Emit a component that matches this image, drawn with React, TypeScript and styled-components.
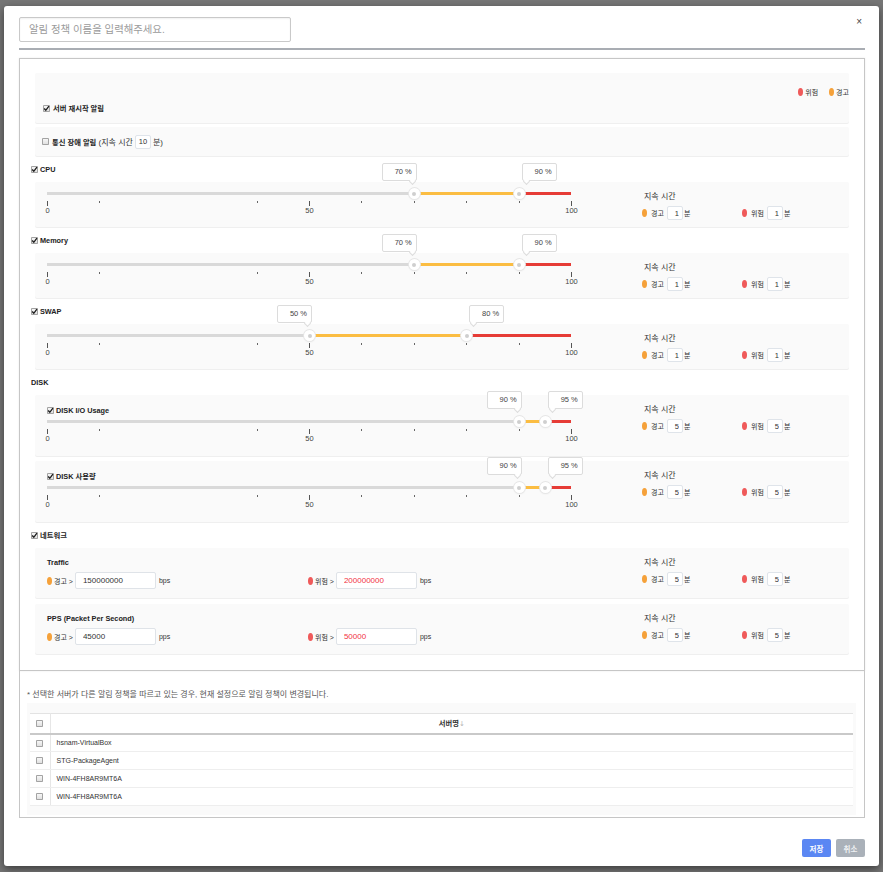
import React from "react";
import styled, { createGlobalStyle } from "styled-components";

const GlobalStyle = createGlobalStyle`
  html, body { margin: 0; padding: 0; }
  body {
    background: #767676;
    font-family: "Liberation Sans", "Noto Sans CJK KR", sans-serif;
    color: #333;
  }
  *, *::before, *::after { box-sizing: border-box; }
  input, button { font-family: inherit; }
`;

const C = {
  warn: "#f5a13a",
  danger: "#ef5a5a",
  trackWarn: "#fbbd42",
  trackDanger: "#e63c36",
  trackBase: "#d9d9d9",
};

/* ---------- shell ---------- */
const Backdrop = styled.div`
  width: 883px;
  height: 872px;
  padding: 6px 4px;
  background: #767676;
`;

const Modal = styled.div`
  height: 860px;
  background: #fff;
  border-radius: 3px;
  box-shadow: 0 3px 9px rgba(0, 0, 0, 0.5);
  padding: 11px 14px 9px 15px;
  display: flex;
  flex-direction: column;
`;

const Header = styled.div`
  display: flex;
  justify-content: space-between;
  align-items: flex-start;
`;

const NameInput = styled.input`
  width: 272px;
  height: 25px;
  border: 1px solid #c9c9c9;
  border-radius: 2px;
  padding: 0 9px;
  font-size: 10.4px;
  color: #333;
  outline: none;
  box-shadow: inset 0 1px 2px rgba(0, 0, 0, 0.06);
  &::placeholder { color: #9b9b9b; }
`;

const CloseButton = styled.button`
  border: 0;
  background: none;
  padding: 0;
  margin: 0 3px 0 0;
  font-size: 10px;
  line-height: 10px;
  color: #444;
`;

const Divider = styled.div`
  height: 2px;
  margin-top: 6px;
  background: #a9adb3;
`;

const SettingsPanel = styled.div`
  margin-top: 8px;
  border: 1px solid #c6c6c6;
  padding: 14px 15px 16px 11px;
  box-shadow: 0 0 2px rgba(0, 0, 0, 0.08);
`;

/* ---------- common bits ---------- */
const Well = styled.div<{ $h: number; $mt?: number }>`
  height: ${(p) => p.$h}px;
  margin: ${(p) => p.$mt ?? 0}px 0 0 4px;
  background: #fafafa;
  border-radius: 2px;
  box-shadow: 0 1px 0 #efefef;
`;

const RestartWell = styled(Well)`
  display: flex;
  flex-direction: column;
  padding: 14px 0 0 8px;
`;

const OutageWell = styled(Well)`
  display: flex;
  align-items: center;
  padding-left: 7px;
  font-size: 8px;
`;

const MetricWell = styled(Well)`
  display: grid;
  grid-template-columns: 524px 1fr;
  column-gap: 71px;
  align-items: start;
  padding-left: 12px;
`;

const LabelRow = styled.div`
  height: 26px;
  display: flex;
  align-items: center;
  gap: 2px;
  font-weight: bold;
  font-size: 7.3px;
  color: #222;
`;

const CheckLabel = styled.div<{ $gap?: number }>`
  display: flex;
  align-items: center;
  gap: ${(p) => p.$gap ?? 3}px;
  height: 10px;
  font-weight: bold;
  font-size: 7.3px;
  color: #222;
`;

const CheckBoxBox = styled.span`
  flex: none;
  width: 7px;
  height: 7px;
  border-radius: 1px;
  background: linear-gradient(#fbfbfb, #dcdcdc);
  box-shadow: inset 0 0 0 1px #a3a3a3;
  display: inline-flex;
  align-items: center;
  justify-content: center;
  vertical-align: middle;
`;

function Check({ checked }: { checked?: boolean }) {
  return (
    <CheckBoxBox>
      {checked && (
        <svg width="7" height="7" viewBox="0 0 7 7">
          <path d="M1.2 3.5 2.8 5.3 5.9 1.2" fill="none" stroke="#1a1a1a" strokeWidth="1.3" />
        </svg>
      )}
    </CheckBoxBox>
  );
}

const Dot = styled.span<{ $c: string }>`
  flex: none;
  width: 5px;
  height: 8px;
  border-radius: 50%;
  background: ${(p) => p.$c};
`;

const Legend = styled.div`
  display: flex;
  justify-content: flex-end;
  align-items: center;
  gap: 11px;
  height: 10px;
  font-size: 7px;
  color: #333;
`;

const LegendItem = styled.span`
  display: flex;
  align-items: center;
  gap: 2px;
`;

const RestartLabel = styled(CheckLabel)`
  margin-top: 6px;
`;

const Normal = styled.span`
  font-weight: normal;
  font-size: 8px;
  color: #333;
`;

const OutageInput = styled.input`
  width: 16px;
  height: 14px;
  margin: 0 2px;
  border: 1px solid #dfe4ea;
  border-radius: 2px;
  text-align: center;
  padding: 0;
  font-size: 7.5px;
  color: #333;
`;

/* ---------- slider ---------- */
const W = 524;
const px = (v: number) => (v / 100) * W;
const TICKS = [0, 10, 40, 50, 60, 70, 80, 90, 100];
const MAJOR = [0, 50, 100];

const SliderCol = styled.div<{ $pt: number }>`
  padding-top: ${(p) => p.$pt}px;
`;

const SubLabel = styled(CheckLabel)`
  height: 10px;
  margin-bottom: 0;
  gap: 2px;
`;

const SliderArea = styled.div`
  position: relative;
  width: ${W}px;
  height: 28px;
`;

const Track = styled.div`
  position: absolute;
  left: 0;
  right: 0;
  top: 5px;
  height: 3px;
  display: flex;
`;

const Seg = styled.div<{ $c: string }>`
  height: 100%;
  background: ${(p) => p.$c};
`;

const Tick = styled.span<{ $major?: boolean }>`
  position: absolute;
  top: 14px;
  width: 1px;
  height: ${(p) => (p.$major ? 5 : 2)}px;
  background: ${(p) => (p.$major ? "#555" : "#666")};
`;

const TickLabel = styled.span`
  position: absolute;
  top: 19px;
  transform: translateX(-50%);
  font-size: 7.5px;
  line-height: 9px;
  color: #444;
`;

const Handle = styled.span`
  position: absolute;
  top: 1px;
  width: 11px;
  height: 11px;
  margin-left: -5px;
  border-radius: 50%;
  background: #fff;
  box-shadow: 0 0 0 1px #e6e6e6, 0 1px 2px rgba(0, 0, 0, 0.08);
  display: flex;
  align-items: center;
  justify-content: center;
  &::after {
    content: "";
    width: 4px;
    height: 4px;
    border-radius: 50%;
    background: #cfcfcf;
  }
`;

const Bubble = styled.span<{ $side: "left" | "right" }>`
  position: absolute;
  top: -24px;
  width: 35px;
  height: 18px;
  background: #fff;
  border: 1px solid #dcdcdc;
  border-radius: 2px;
  text-align: right;
  padding-right: 4px;
  font-size: 7.5px;
  line-height: 16px;
  color: #444;
  &::after {
    content: "";
    position: absolute;
    bottom: -4px;
    ${(p) => (p.$side === "left" ? "right: 1px;" : "left: 1px;")}
    width: 5px;
    height: 5px;
    background: #fff;
    border-right: 1px solid #dcdcdc;
    border-bottom: 1px solid #dcdcdc;
    transform: rotate(45deg);
  }
`;

function RangeSlider({ warn, danger }: { warn: number; danger: number }) {
  return (
    <SliderArea>
      <Track>
        <Seg $c={C.trackBase} style={{ width: px(warn) }} />
        <Seg $c={C.trackWarn} style={{ width: px(danger - warn) }} />
        <Seg $c={C.trackDanger} style={{ flex: 1 }} />
      </Track>
      {TICKS.map((t) => (
        <Tick key={t} $major={MAJOR.includes(t)} style={{ left: px(t) }} />
      ))}
      {MAJOR.map((t) => (
        <TickLabel key={t} style={{ left: px(t) + 0.5 }}>
          {t}
        </TickLabel>
      ))}
      <Bubble $side="left" style={{ left: px(warn) + 3 - 35 }}>
        {warn} %
      </Bubble>
      <Bubble $side="right" style={{ left: px(danger) + 3 }}>
        {danger} %
      </Bubble>
      <Handle style={{ left: px(warn) }} />
      <Handle style={{ left: px(danger) }} />
    </SliderArea>
  );
}

/* ---------- duration ---------- */
const DurCol = styled.div`
  padding-top: 10px;
`;

const DurTitle = styled.div`
  font-size: 8px;
  line-height: 10px;
  margin-left: 2px;
  color: #333;
`;

const DurRow = styled.div`
  display: flex;
  align-items: center;
  height: 14px;
  margin-top: 4px;
`;

const DurGroup = styled.div`
  display: flex;
  align-items: center;
  width: 100px;
`;

const SmallText = styled.span`
  font-size: 7px;
  color: #333;
  margin-left: 4px;
`;

const MinuteInput = styled.input`
  width: 16px;
  height: 14px;
  margin: 0 1px 0 3px;
  border: 1px solid #dfe4ea;
  border-radius: 2px;
  text-align: right;
  padding: 0 3px 0 0;
  font-size: 7.5px;
  color: #333;
`;

const Unit = styled.span`
  font-size: 7px;
  color: #333;
`;

function Duration({ w, d }: { w: number; d: number }) {
  return (
    <DurCol>
      <DurTitle>지속 시간</DurTitle>
      <DurRow>
        <DurGroup>
          <Dot $c={C.warn} />
          <SmallText>경고</SmallText>
          <MinuteInput defaultValue={w} />
          <Unit>분</Unit>
        </DurGroup>
        <DurGroup>
          <Dot $c={C.danger} />
          <SmallText>위험</SmallText>
          <MinuteInput defaultValue={d} />
          <Unit>분</Unit>
        </DurGroup>
      </DurRow>
    </DurCol>
  );
}

/* ---------- network ---------- */
const NetCol = styled.div`
  padding-top: 10px;
`;

const NetTitle = styled.div`
  font-weight: bold;
  font-size: 7.3px;
  line-height: 10px;
  color: #222;
`;

const NetRow = styled.div`
  display: flex;
  align-items: center;
  height: 17px;
  margin-top: 4px;
`;

const ThresholdGroup = styled.div`
  display: flex;
  align-items: center;
  width: 261px;
`;

const CompareText = styled.span`
  font-size: 7px;
  color: #333;
  margin-left: 2px;
`;

const ValueInput = styled.input<{ $danger?: boolean }>`
  width: 81px;
  height: 17px;
  margin: 0 3px 0 2px;
  border: 1px solid #dfe3e8;
  border-radius: 2px;
  padding: 0 0 0 7px;
  font-size: 8px;
  color: ${(p) => (p.$danger ? "#f2323f" : "#333")};
`;

/* ---------- lower panel ---------- */
const TargetPanel = styled.div`
  border: 1px solid #c6c6c6;
  border-top: 0;
  padding: 19px 8px 2px 7px;
`;

const Note = styled.p`
  margin: 0;
  font-size: 8px;
  line-height: 10px;
  color: #555;
`;

const TableWell = styled.div`
  margin-top: 3px;
  background: #fafafa;
  padding: 10px 3px 9px;
`;

const ServerTable = styled.table`
  width: 100%;
  border-collapse: collapse;
  background: #fff;
`;

const HeadCell = styled.th<{ $narrow?: boolean }>`
  height: 20px;
  padding: 0;
  border-top: 1px solid #e3e3e3;
  border-bottom: 2px solid #c9c9c9;
  ${(p) => (p.$narrow ? "width: 20px; border-right: 1px solid #e6e6e6;" : "")}
  font-weight: bold;
  font-size: 7.3px;
  color: #333;
  text-align: center;
  vertical-align: middle;
`;

const SortArrow = styled.span`
  font-family: "DejaVu Sans", sans-serif;
  font-weight: normal;
  font-size: 7px;
  color: #b5b5b5;
`;

const Cell = styled.td<{ $narrow?: boolean }>`
  height: 18px;
  padding: ${(p) => (p.$narrow ? "0" : "0 0 0 6px")};
  border-bottom: 1px solid #eeeeee;
  ${(p) => (p.$narrow ? "width: 20px; border-right: 1px solid #e6e6e6; text-align: center;" : "")}
  font-size: 7px;
  color: #333;
  vertical-align: middle;
`;

const Footer = styled.div`
  margin-top: auto;
  display: flex;
  justify-content: flex-end;
  gap: 5px;
`;

const Button = styled.button<{ $primary?: boolean }>`
  width: 29px;
  height: 18px;
  border: 0;
  border-radius: 2px;
  padding: 0;
  font-size: 7.5px;
  font-weight: bold;
  color: ${(p) => (p.$primary ? "#fff" : "#eef0f2")};
  background: ${(p) => (p.$primary ? "#5b87f3" : "#aab1b9")};
`;

/* ---------- data ---------- */
const metrics = [
  { label: "CPU", warn: 70, danger: 90, w: 1, d: 1 },
  { label: "Memory", warn: 70, danger: 90, w: 1, d: 1 },
  { label: "SWAP", warn: 50, danger: 80, w: 1, d: 1 },
];

const disks = [
  { label: "DISK I/O Usage", warn: 90, danger: 95, w: 5, d: 5 },
  { label: "DISK 사용량", warn: 90, danger: 95, w: 5, d: 5 },
];

const network = [
  { label: "Traffic", warn: "150000000", danger: "200000000", unit: "bps" },
  { label: "PPS (Packet Per Second)", warn: "45000", danger: "50000", unit: "pps" },
];

const servers = ["hsnam-VirtualBox", "STG-PackageAgent", "WIN-4FH8AR9MT6A", "WIN-4FH8AR9MT6A"];

export default function App() {
  return (
    <>
      <GlobalStyle />
      <Backdrop>
        <Modal>
          <Header>
            <NameInput placeholder="알림 정책 이름을 입력해주세요." />
            <CloseButton>×</CloseButton>
          </Header>
          <Divider />

          <SettingsPanel>
            <RestartWell $h={50}>
              <Legend>
                <LegendItem>
                  <Dot $c={C.danger} />
                  위험
                </LegendItem>
                <LegendItem>
                  <Dot $c={C.warn} />
                  경고
                </LegendItem>
              </Legend>
              <RestartLabel>
                <Check checked />
                서버 재시작 알림
              </RestartLabel>
            </RestartWell>

            <OutageWell $h={29} $mt={4}>
              <CheckLabel>
                <Check />
                통신 장애 알림
              </CheckLabel>
              <Normal>&nbsp;(지속 시간</Normal>
              <OutageInput defaultValue="10" />
              <Normal>분)</Normal>
            </OutageWell>

            {metrics.map((m) => (
              <React.Fragment key={m.label}>
                <LabelRow>
                  <Check checked />
                  {m.label}
                </LabelRow>
                <MetricWell $h={45}>
                  <SliderCol $pt={5}>
                    <RangeSlider warn={m.warn} danger={m.danger} />
                  </SliderCol>
                  <Duration w={m.w} d={m.d} />
                </MetricWell>
              </React.Fragment>
            ))}

            <LabelRow>DISK</LabelRow>
            {disks.map((m, i) => (
              <MetricWell key={m.label} $h={61} $mt={i ? 5 : 0}>
                <SliderCol $pt={10}>
                  <SubLabel>
                    <Check checked />
                    {m.label}
                  </SubLabel>
                  <RangeSlider warn={m.warn} danger={m.danger} />
                </SliderCol>
                <Duration w={m.w} d={m.d} />
              </MetricWell>
            ))}

            <LabelRow>
              <Check checked />
              네트워크
            </LabelRow>
            {network.map((n, i) => (
              <MetricWell key={n.label} $h={50} $mt={i ? 6 : 0}>
                <NetCol>
                  <NetTitle>{n.label}</NetTitle>
                  <NetRow>
                    <ThresholdGroup>
                      <Dot $c={C.warn} />
                      <CompareText>경고 &gt;</CompareText>
                      <ValueInput defaultValue={n.warn} />
                      <Unit>{n.unit}</Unit>
                    </ThresholdGroup>
                    <ThresholdGroup>
                      <Dot $c={C.danger} />
                      <CompareText>위험 &gt;</CompareText>
                      <ValueInput $danger defaultValue={n.danger} />
                      <Unit>{n.unit}</Unit>
                    </ThresholdGroup>
                  </NetRow>
                </NetCol>
                <Duration w={5} d={5} />
              </MetricWell>
            ))}
          </SettingsPanel>

          <TargetPanel>
            <Note>* 선택한 서버가 다른 알림 정책을 따르고 있는 경우, 현재 설정으로 알림 정책이 변경됩니다.</Note>
            <TableWell>
              <ServerTable>
                <thead>
                  <tr>
                    <HeadCell $narrow>
                      <Check />
                    </HeadCell>
                    <HeadCell>
                      서버명<SortArrow>↓</SortArrow>
                    </HeadCell>
                  </tr>
                </thead>
                <tbody>
                  {servers.map((s, i) => (
                    <tr key={i}>
                      <Cell $narrow>
                        <Check />
                      </Cell>
                      <Cell>{s}</Cell>
                    </tr>
                  ))}
                </tbody>
              </ServerTable>
            </TableWell>
          </TargetPanel>

          <Footer>
            <Button $primary>저장</Button>
            <Button>취소</Button>
          </Footer>
        </Modal>
      </Backdrop>
    </>
  );
}
